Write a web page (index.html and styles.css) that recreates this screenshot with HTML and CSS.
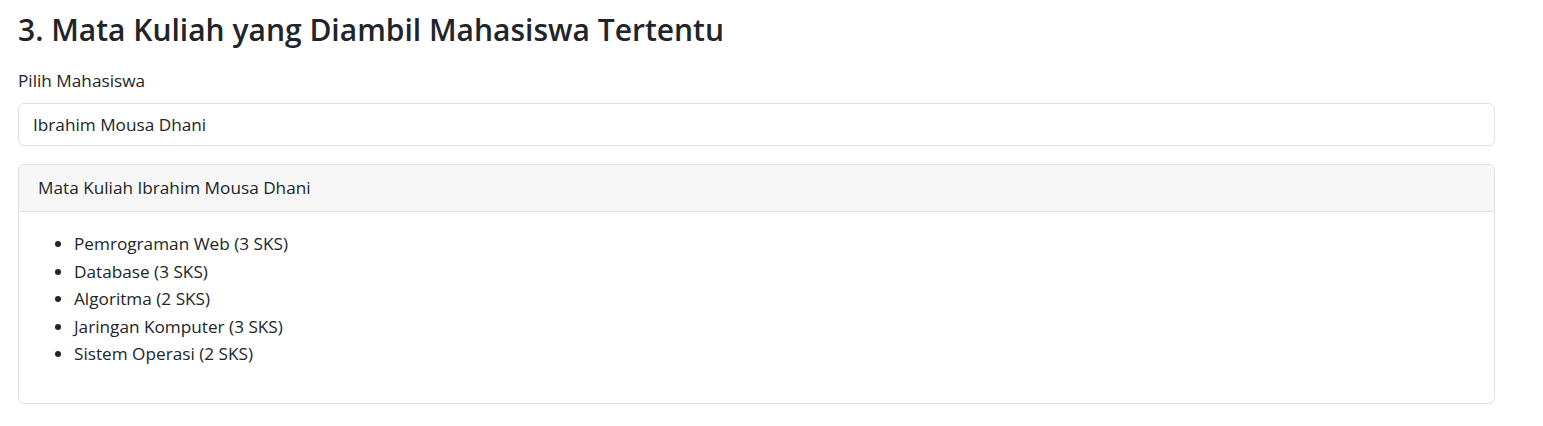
FILE: index.html
```html
<!DOCTYPE html>
<html lang="id">
<head>
    <meta charset="UTF-8">
    <meta name="viewport" content="width=device-width, initial-scale=1.0">
    <title>Mata Kuliah Mahasiswa</title>
    <link rel="stylesheet" href="styles.css">
</head>
<body>
    <div class="page">
        <h2>3. Mata Kuliah yang Diambil Mahasiswa Tertentu</h2>

        <label for="mahasiswa" class="form-label">Pilih Mahasiswa</label>
        <div class="form-select" id="mahasiswa">Ibrahim Mousa Dhani</div>

        <div class="card">
            <div class="card-header">Mata Kuliah Ibrahim Mousa Dhani</div>
            <div class="card-body">
                <ul class="matkul-list">
                    <li>Pemrograman Web (3 SKS)</li>
                    <li>Database (3 SKS)</li>
                    <li>Algoritma (2 SKS)</li>
                    <li>Jaringan Komputer (3 SKS)</li>
                    <li>Sistem Operasi (2 SKS)</li>
                </ul>
            </div>
        </div>
    </div>
</body>
</html>
```

FILE: styles.css
```css
body {
    margin: 0;
    font-family: "Open Sans", "Noto Sans", sans-serif;
    font-size: 17.2px;
    line-height: 24px;
    color: #212529;
    background-color: #fff;
}

.page {
    padding: 12px 48px 0 18px;
}

h2 {
    margin: 0 0 21px;
    font-size: 30px;
    font-weight: 600;
    line-height: 36px;
}

.form-label {
    display: block;
    margin-bottom: 10px;
}

.form-select {
    height: 43px;
    box-sizing: border-box;
    padding: 9px 14px;
    border: 1px solid #dee2e6;
    border-radius: 6px;
    margin-bottom: 18px;
}

.card {
    border: 1px solid #dfdfdf;
    border-radius: 6px;
    overflow: hidden;
}

.card-header {
    padding: 11px 19px;
    background-color: #f7f7f7;
    border-bottom: 1px solid #dfdfdf;
}

.card-body {
    padding: 18px 19px;
}

.matkul-list {
    margin: 0 0 17px;
    padding-left: 36px;
    line-height: 27.6px;
}
```
